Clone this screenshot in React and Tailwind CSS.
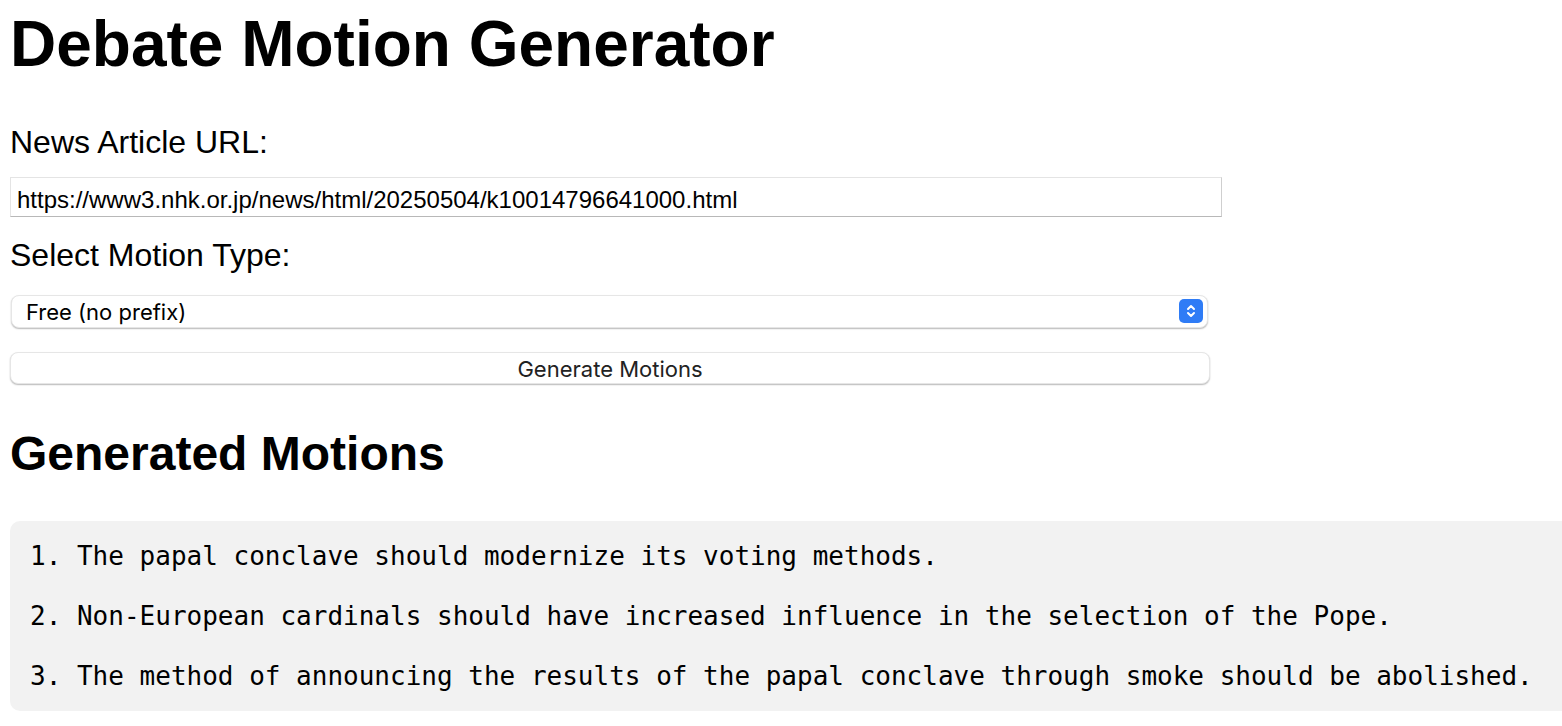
import React, { useState } from 'react';

const MOTIONS = [
  'The papal conclave should modernize its voting methods.',
  'Non-European cardinals should have increased influence in the selection of the Pope.',
  'The method of announcing the results of the papal conclave through smoke should be abolished.',
];

const Stepper = () => (
  <span className="pointer-events-none absolute right-[5px] top-[4px] flex h-[24px] w-[24px] items-center justify-center rounded-[5px] bg-[#2f7cf6]">
    <svg width="12" height="16" viewBox="0 0 12 16" fill="none" stroke="white" strokeWidth="2" strokeLinecap="round" strokeLinejoin="round">
      <path d="M3 6 L6 3 L9 6" />
      <path d="M3 10 L6 13 L9 10" />
    </svg>
  </span>
);

const App = () => {
  const [url, setUrl] = useState('https://www3.nhk.or.jp/news/html/20250504/k10014796641000.html');
  const [motionType, setMotionType] = useState('free');

  return (
    <div className="min-h-screen bg-white pl-[10px] pt-[12px] text-black font-['Liberation_Sans',Arial,sans-serif]">
      <h1 className="text-[64px] font-bold leading-[64px]">Debate Motion Generator</h1>

      {/* form */}
      <label className="mt-[50px] block text-[32px] leading-[32px]">News Article URL:</label>
      <input
        type="text"
        value={url}
        onChange={(e) => setUrl(e.target.value)}
        className="mt-[19px] block h-[40px] w-[1212px] border border-[#e4e4e4] border-b-[#b8b8b8] border-r-[#cfcfcf] bg-white pl-[6px] pt-[6px] text-[24px] text-black outline-none"
      />

      <label className="mt-[22px] block text-[32px] leading-[32px]">Select Motion Type:</label>
      <div className="relative mt-[24px] ml-[1px] w-[1197px]">
        <select
          value={motionType}
          onChange={(e) => setMotionType(e.target.value)}
          className="block h-[33px] w-full appearance-none rounded-[8px] border border-[#e6e6e6] bg-white pl-[14px] text-[22px] text-black shadow-[0_1px_1.5px_rgba(0,0,0,0.28)] outline-none font-['Inter',sans-serif]"
        >
          <option value="free">Free (no prefix)</option>
          <option value="thbt">This House Believes That</option>
          <option value="thw">This House Would</option>
        </select>
        <Stepper />
      </div>

      <button className="mt-[24px] block h-[32px] w-[1200px] rounded-[8px] border border-[#e6e6e6] bg-white text-[22px] text-[#222] shadow-[0_1px_1.5px_rgba(0,0,0,0.28)] font-['Inter',sans-serif]">
        Generate Motions
      </button>

      {/* results */}
      <h2 className="mt-[46px] text-[48px] font-bold leading-[48px]">Generated Motions</h2>
      <pre className="mt-[43px] rounded-l-[10px] bg-[#f2f2f2] px-[20px] py-[20px] text-[26px] leading-[30px] text-black font-['DejaVu_Sans_Mono',monospace]">
        {MOTIONS.map((m, i) => `${i + 1}. ${m}`).join('\n\n')}
      </pre>
    </div>
  );
};

export default App;
